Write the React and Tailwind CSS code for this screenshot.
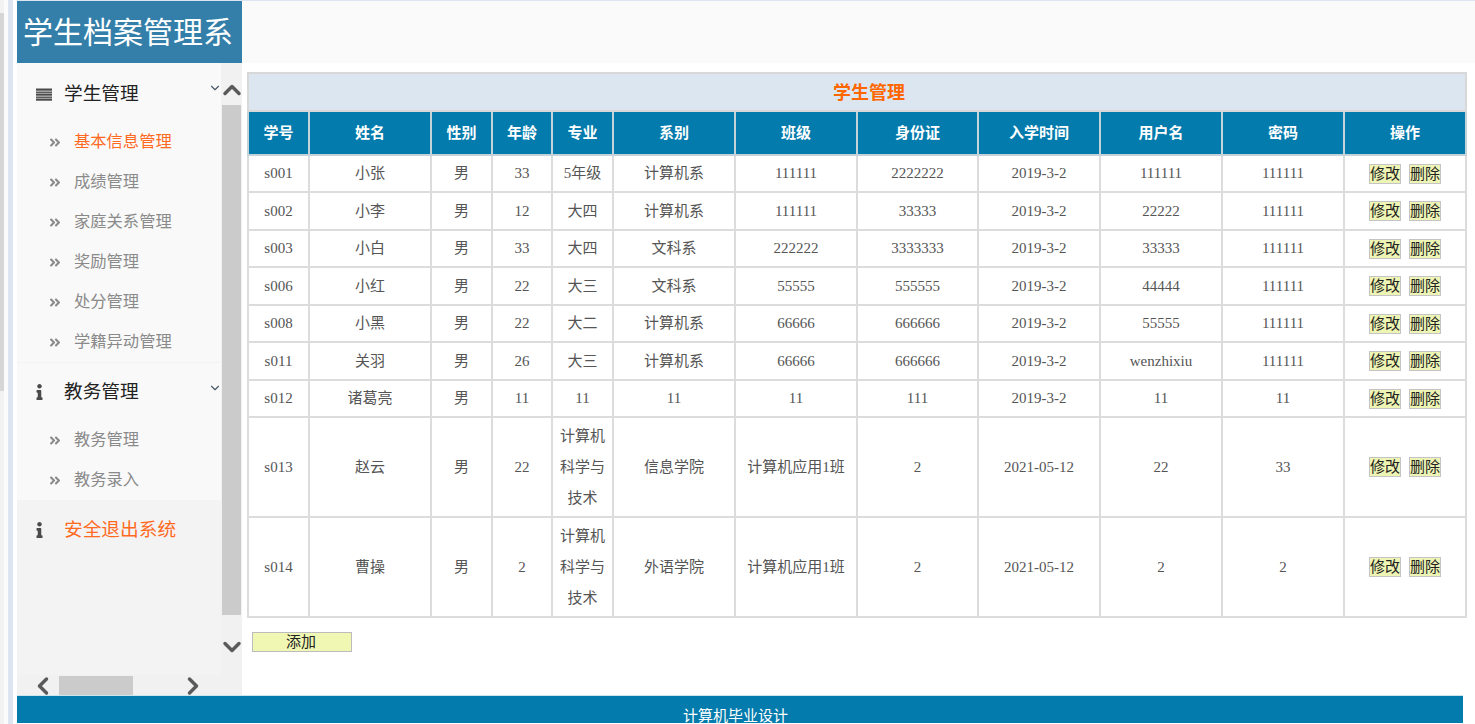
import React from "react";
import { FaInfo, FaAngleDoubleRight } from "react-icons/fa";
import { ChevronDown, ChevronUp, ChevronLeft, ChevronRight } from "lucide-react";

const cols = [61, 122, 61, 60, 61, 122, 122, 121, 122, 122, 122, 122];
const heads = ["学号", "姓名", "性别", "年龄", "专业", "系别", "班级", "身份证", "入学时间", "用户名", "密码", "操作"];
const rows = [
  [37, "s001", "小张", "男", "33", "5年级", "计算机系", "111111", "2222222", "2019-3-2", "111111", "111111"],
  [38, "s002", "小李", "男", "12", "大四", "计算机系", "111111", "33333", "2019-3-2", "22222", "111111"],
  [37, "s003", "小白", "男", "33", "大四", "文科系", "222222", "3333333", "2019-3-2", "33333", "111111"],
  [38, "s006", "小红", "男", "22", "大三", "文科系", "55555", "555555", "2019-3-2", "44444", "111111"],
  [37, "s008", "小黑", "男", "22", "大二", "计算机系", "66666", "666666", "2019-3-2", "55555", "111111"],
  [38, "s011", "关羽", "男", "26", "大三", "计算机系", "66666", "666666", "2019-3-2", "wenzhixiu", "111111"],
  [37, "s012", "诸葛亮", "男", "11", "11", "11", "11", "111", "2019-3-2", "11", "11"],
  [100, "s013", "赵云", "男", "22", "计算机科学与技术", "信息学院", "计算机应用1班", "2", "2021-05-12", "22", "33"],
  [100, "s014", "曹操", "男", "2", "计算机科学与技术", "外语学院", "计算机应用1班", "2", "2021-05-12", "2", "2"],
];

function SubItem({ label, active }) {
  return (
    <div className="flex h-10 items-center pl-[32px]">
      <FaAngleDoubleRight className="w-[12px] h-[13px] text-[#8a8a8a] mr-[13px]" />
      <span className={"text-[16.3px] " + (active ? "text-[#ff6a1f]" : "text-[#8a8a8a]")}>{label}</span>
    </div>
  );
}

function MenuHead({ icon, label, orange, chevron, top = "" }) {
  return (
    <div className={"relative flex h-[56px] items-center pl-[19px] " + top}>
      <span className="w-[28px] flex items-center">{icon}</span>
      <span className={"text-[18.7px] " + (orange ? "text-[#ff6a1f]" : "text-[#222222]")}>{label}</span>
      {chevron && <ChevronDown className="absolute left-[191px] top-[18px] w-[14px] h-[14px] text-[#4a5a6a]" strokeWidth={2} />}
    </div>
  );
}

function ListIcon() {
  return (
    <svg width="16" height="13" viewBox="0 0 16 13" className="text-[#4a4a4a]" fill="currentColor">
      <rect x="0" y="0.5" width="16" height="2.2" />
      <rect x="0" y="3.5" width="16" height="1.4" />
      <rect x="0" y="5.5" width="16" height="2.2" />
      <rect x="0" y="8.5" width="16" height="1.4" />
      <rect x="0" y="10.5" width="16" height="2.2" />
    </svg>
  );
}

function ActBtn({ label, className = "" }) {
  return (
    <button className={"w-[32px] h-[20px] bg-[#eef5b4] border border-[#c4c4c4] text-[15px] leading-[18px] text-[#222222] p-0 " + className}>
      {label}
    </button>
  );
}

export default function App() {
  return (
    <div
      className="flex w-[1475px] h-[724px] overflow-hidden bg-white"
      style={{ fontFamily: '"Liberation Serif","Noto Sans CJK SC",serif' }}
    >
      <div className="flex w-[17px] shrink-0">
        <div className="w-[4px] flex flex-col bg-[#f2f2f2]">
          <div className="h-[13px]" />
          <div className="h-[378px] bg-[#d6d6d6]" />
        </div>
        <div className="w-[4px] bg-[#fbfbfb]" />
        <div className="w-[5px] bg-[#dde5f3]" />
        <div className="w-[4px] bg-white" />
      </div>

      <div className="flex flex-col w-[1458px]">
        <div className="flex h-[63px] bg-[#fafafa] border-t border-[#dde5f3] box-border">
          <div className="w-[225px] h-[62px] bg-[#337fa9] text-white text-[30px] leading-[64px] pl-[6px] whitespace-nowrap overflow-hidden">
            学生档案管理系
          </div>
        </div>

        <div className="flex h-[633px]">
          <div className="w-[225px] shrink-0 flex flex-col bg-[#f1f1f1]">
            <div className="flex h-[612px]">
              <div className="w-[204px] bg-[#f3f3f3] flex flex-col">
                <div className="bg-[#f9f9f9] border-b border-[#f3f3f3]">
                  <MenuHead icon={<ListIcon />} label="学生管理" chevron top="pt-[6px]" />
                  <div className="pt-[3px]">
                    <SubItem label="基本信息管理" active />
                    <SubItem label="成绩管理" />
                    <SubItem label="家庭关系管理" />
                    <SubItem label="奖励管理" />
                    <SubItem label="处分管理" />
                    <SubItem label="学籍异动管理" />
                  </div>
                </div>
                <div className="bg-[#f9f9f9]">
                  <MenuHead icon={<FaInfo className="w-[15px] h-[16px] -ml-[4px] text-[#4a4a4a]" />} label="教务管理" chevron top="pt-[2px]" />
                  <div className="pt-px">
                    <SubItem label="教务管理" />
                    <SubItem label="教务录入" />
                  </div>
                </div>
                <div className="pt-[2px]">
                  <MenuHead icon={<FaInfo className="w-[15px] h-[16px] -ml-[4px] text-[#4a4a4a]" />} label="安全退出系统" orange />
                </div>
              </div>
              <div className="w-[21px] flex flex-col items-center">
                <ChevronUp className="w-[28px] h-[28px] shrink-0 mt-[13px] text-[#5a5a5a]" strokeWidth={3} />
                <div className="w-[19px] h-[510px] shrink-0 mt-px bg-[#cbcbcb]" />
                <ChevronDown className="w-[28px] h-[28px] shrink-0 mt-[18px] text-[#5a5a5a]" strokeWidth={3} />
              </div>
            </div>
            <div className="flex items-center h-[21px] pl-[12px]">
              <ChevronLeft className="w-[28px] h-[28px] shrink-0 text-[#5a5a5a]" strokeWidth={3} />
              <div className="w-[74px] h-[19px] shrink-0 ml-[2px] bg-[#cbcbcb]" />
              <ChevronRight className="w-[28px] h-[28px] shrink-0 ml-[46px] text-[#5a5a5a]" strokeWidth={3} />
            </div>
          </div>

          <div className="flex-1 pl-[5px] pt-[9px]">
            <table className="table-fixed w-[1219px] border-collapse border-2 border-[#dcdcdc] text-[15px] text-[#555555] text-center">
              <colgroup>
                {cols.map((w, i) => (
                  <col key={i} style={{ width: w }} />
                ))}
              </colgroup>
              <thead>
                <tr className="h-[38px] bg-[#dce6f1]">
                  <th colSpan={12} className="border-2 border-[#d8d8d8] text-[18px] font-bold text-[#ff6600] p-0 pl-[24px] pt-[2px]">
                    学生管理
                  </th>
                </tr>
                <tr className="h-[44px] bg-[#037bac]">
                  {heads.map((h) => (
                    <th key={h} className="border-2 border-[#c4d2da] text-[15px] font-bold text-white p-0">
                      {h}
                    </th>
                  ))}
                </tr>
              </thead>
              <tbody>
                {rows.map((r) => (
                  <tr key={r[1]} style={{ height: r[0] }}>
                    {r.slice(1).map((c, i) => (
                      <td
                        key={i}
                        className={"border-2 border-[#dcdcdc] p-0 " + (i === 4 && c.length > 4 ? "leading-[31px] px-[6px]" : "")}
                      >
                        {c}
                      </td>
                    ))}
                    <td className="border-2 border-[#dcdcdc] p-0">
                      <div className="flex justify-center gap-[8px]">
                        <ActBtn label="修改" />
                        <ActBtn label="删除" />
                      </div>
                    </td>
                  </tr>
                ))}
              </tbody>
            </table>
            <button className="block mt-[14px] ml-[5px] w-[100px] h-[20px] bg-[#f0f7b2] border border-[#bcbcbc] text-[15px] leading-[18px] text-[#222222] p-0 pr-[2px]">
              添加
            </button>
          </div>
        </div>

        <div className="w-[1446px] h-[28px] bg-[#037bac] border-t border-[#cfe3ee] text-white text-[15px] text-center leading-[40px] pr-[9px] overflow-hidden box-border -mt-px">
          计算机毕业设计
        </div>
      </div>
    </div>
  );
}
